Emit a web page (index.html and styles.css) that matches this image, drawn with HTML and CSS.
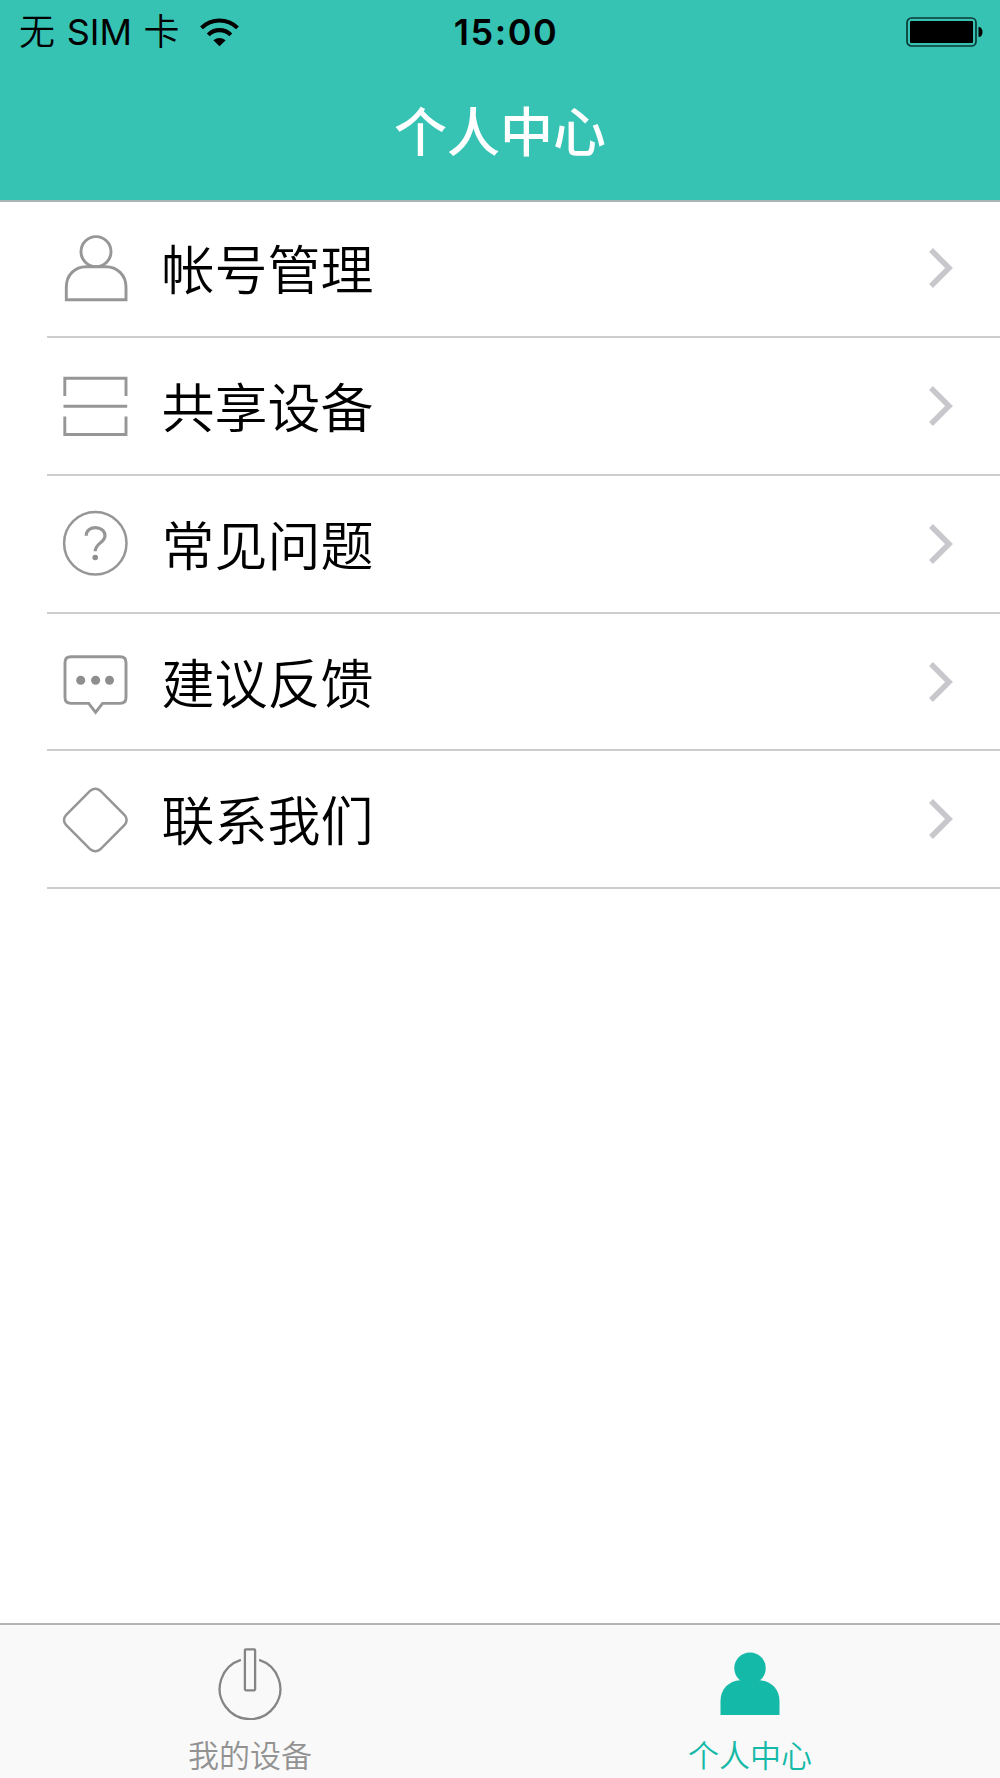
FILE: index.html
```html
<!DOCTYPE html>
<html lang="zh-CN">
<head>
    <meta charset="UTF-8">
    <meta name="viewport" content="width=device-width, initial-scale=1.0">
    <title>个人中心</title>
    <link rel="stylesheet" href="styles.css">
</head>
<body>
    <header class="header">
        <div class="status-bar">
            <div class="carrier">
                <span>无 <span class="sim">SIM</span> 卡</span>
                <svg class="wifi" viewBox="0 0 38 28">
                    <path d="M1.5 9.5A25 25 0 0 1 36.500 9.500" fill="none" stroke="#000" stroke-width="4"/>
                    <path d="M8 16.300A15.500 15.500 0 0 1 30 16.300" fill="none" stroke="#000" stroke-width="4"/>
                    <path d="M13 21.500Q19 17 25 21.500L19 27.500Z"/>
                </svg>
            </div>
            <div class="time">15:00</div>
            <svg class="battery" viewBox="0 0 78 30">
                <rect x="1" y="1" width="69" height="28" rx="4.500" fill="none" stroke="#0b3a35" stroke-width="1.700"/>
                <rect x="4" y="4" width="63" height="22" rx="1"/>
                <path d="M72.500 10c2.500 0 4 2 4 5s-1.500 5-4 5z"/>
            </svg>
        </div>
        <h1 class="title">个人中心</h1>
    </header>

    <ul class="menu">
        <li class="menu-item">
            <svg class="icon" viewBox="0 0 70 70">
                <circle cx="36" cy="18.600" r="15"/>
                <path d="M6.300 66.800V54C6.300 42 15 33.800 26 33.800H46C57 33.800 66 42 66 54V66.800Z"/>
            </svg>
            <span class="label">帐号管理</span>
            <svg class="arrow" viewBox="0 0 24 42"><path d="M2 3L20 21L2 39"/></svg>
        </li>
        <li class="menu-item">
            <svg class="icon" viewBox="0 0 70 70">
                <path d="M4.800 25V7.200H66V25M4.800 45.500V63.500H66V45.500M3.500 35.200H67.200"/>
            </svg>
            <span class="label">共享设备</span>
            <svg class="arrow" viewBox="0 0 24 42"><path d="M2 3L20 21L2 39"/></svg>
        </li>
        <li class="menu-item">
            <svg class="icon thin" viewBox="0 0 70 70">
                <circle cx="35.300" cy="34.300" r="31.200"/>
                <path class="mark" d="M26.200 26.700C26.200 15.700 45 16.200 45 26.700C45 33.700 35.200 34.200 35.200 42.200"/>
                <circle class="dot" cx="35.200" cy="48.500" r="2.800"/>
            </svg>
            <span class="label">常见问题</span>
            <svg class="arrow" viewBox="0 0 24 42"><path d="M2 3L20 21L2 39"/></svg>
        </li>
        <li class="menu-item">
            <svg class="icon" viewBox="0 0 70 70">
                <path d="M10.800 9.800H60.200Q66 9.800 66 15.600V50.600Q66 56.400 60.200 56.400H42.500L35.600 65.400L28.700 56.400H10.800Q5 56.400 5 50.600V15.600Q5 9.800 10.800 9.800Z"/>
                <circle class="dot" cx="20.700" cy="33.300" r="4.500"/>
                <circle class="dot" cx="35.600" cy="33.300" r="4.500"/>
                <circle class="dot" cx="49.500" cy="33.300" r="4.500"/>
            </svg>
            <span class="label">建议反馈</span>
            <svg class="arrow" viewBox="0 0 24 42"><path d="M2 3L20 21L2 39"/></svg>
        </li>
        <li class="menu-item">
            <svg class="icon thin" viewBox="0 0 70 70">
                <path d="M30.300 6.700Q35.300 2.700 40.300 6.700L64.600 31Q68.600 36 64.600 41L40.300 65.300Q35.300 69.300 30.300 65.300L6 41Q2 36 6 31Z"/>
            </svg>
            <span class="label">联系我们</span>
            <svg class="arrow" viewBox="0 0 24 42"><path d="M2 3L20 21L2 39"/></svg>
        </li>
    </ul>

    <nav class="tab-bar">
        <div class="tab">
            <svg class="tab-icon" viewBox="0 0 70 80">
                <path d="M25.900 19.900A30.300 30.300 0 1 0 44.100 19.900"/>
                <rect x="29.900" y="9.300" width="10.200" height="41" rx="1"/>
            </svg>
            <span class="tab-label">我的设备</span>
        </div>
        <div class="tab active">
            <svg class="tab-icon" viewBox="0 0 70 80">
                <circle cx="35" cy="28.200" r="15.700"/>
                <path d="M5.500 75V61C5.500 49 14 41 25 40.300H45C56 41 64.500 49 64.500 61V75Z"/>
            </svg>
            <span class="tab-label">个人中心</span>
        </div>
    </nav>
</body>
</html>
```

FILE: styles.css
```css
* {
    box-sizing: border-box;
}
body {
    margin: 0;
    width: 1000px;
    height: 1778px;
    display: flex;
    flex-direction: column;
    background-color: #fff;
    color: #000;
    font-family: Inter, "Noto Sans CJK SC", sans-serif;
    overflow: hidden;
}
svg {
    display: block;
    flex: none;
}
.header {
    height: 200px;
    flex: none;
    background-color: #36c3b4;
    box-shadow: 0 2px 0 #a9b5b4;
}
.status-bar {
    height: 64px;
    padding: 0 16px 0 19px;
    display: grid;
    grid-template-columns: 1fr auto 1fr;
    align-items: center;
}
.carrier {
    display: flex;
    align-items: center;
    gap: 20px;
    font-size: 36px;
    font-weight: 350;
    line-height: 64px;
    word-spacing: 1.5px;
    white-space: pre;
}
.sim {
    font-weight: 400;
}
.wifi {
    width: 39px;
    height: 29px;
}
.time {
    padding-left: 9px;
    font-size: 36px;
    font-weight: 600;
    letter-spacing: 1.5px;
}
.battery {
    width: 78px;
    height: 30px;
    justify-self: end;
}
.title {
    margin: 0;
    color: #fff;
    font-size: 53px;
    font-weight: 500;
    line-height: 138px;
    text-align: center;
}
.menu {
    list-style: none;
    margin: 0;
    padding: 0.4px 0 0 47px;
    flex: 1;
}
.menu-item {
    height: 137.75px;
    padding: 0 47.5px 0 13px;
    display: flex;
    align-items: center;
    border-bottom: 2px solid #cdcdcf;
}
.icon {
    width: 70px;
    height: 70px;
    fill: none;
    stroke: #969696;
    stroke-width: 2.9;
}
.icon.thin {
    stroke-width: 2.5;
}
.icon .dot {
    fill: #8e8e8e;
    stroke: none;
}
.icon .mark {
    stroke-width: 3.2;
}
.label {
    flex: 1;
    margin-left: 31.5px;
    padding-top: 6px;
    font-size: 53px;
    font-weight: 350;
    line-height: 80px;
}
.arrow {
    width: 24px;
    height: 42px;
    fill: none;
    stroke: #c7c7cc;
    stroke-width: 5.5;
}
.tab-bar {
    height: 155px;
    flex: none;
    display: flex;
    background-color: #f9f9f9;
    border-top: 2px solid #b4b4b4;
}
.tab {
    flex: 1;
    display: flex;
    flex-direction: column;
    align-items: center;
    padding-top: 15px;
    color: #929292;
}
.tab-icon {
    width: 70px;
    height: 80px;
    fill: none;
    stroke: #858585;
    stroke-width: 2.3;
}
.tab-label {
    margin-top: 13px;
    font-size: 31px;
    font-weight: 350;
    line-height: 46px;
}
.active {
    color: #15b9a7;
}
.active .tab-icon {
    fill: #15b9a7;
    stroke: none;
}
```
